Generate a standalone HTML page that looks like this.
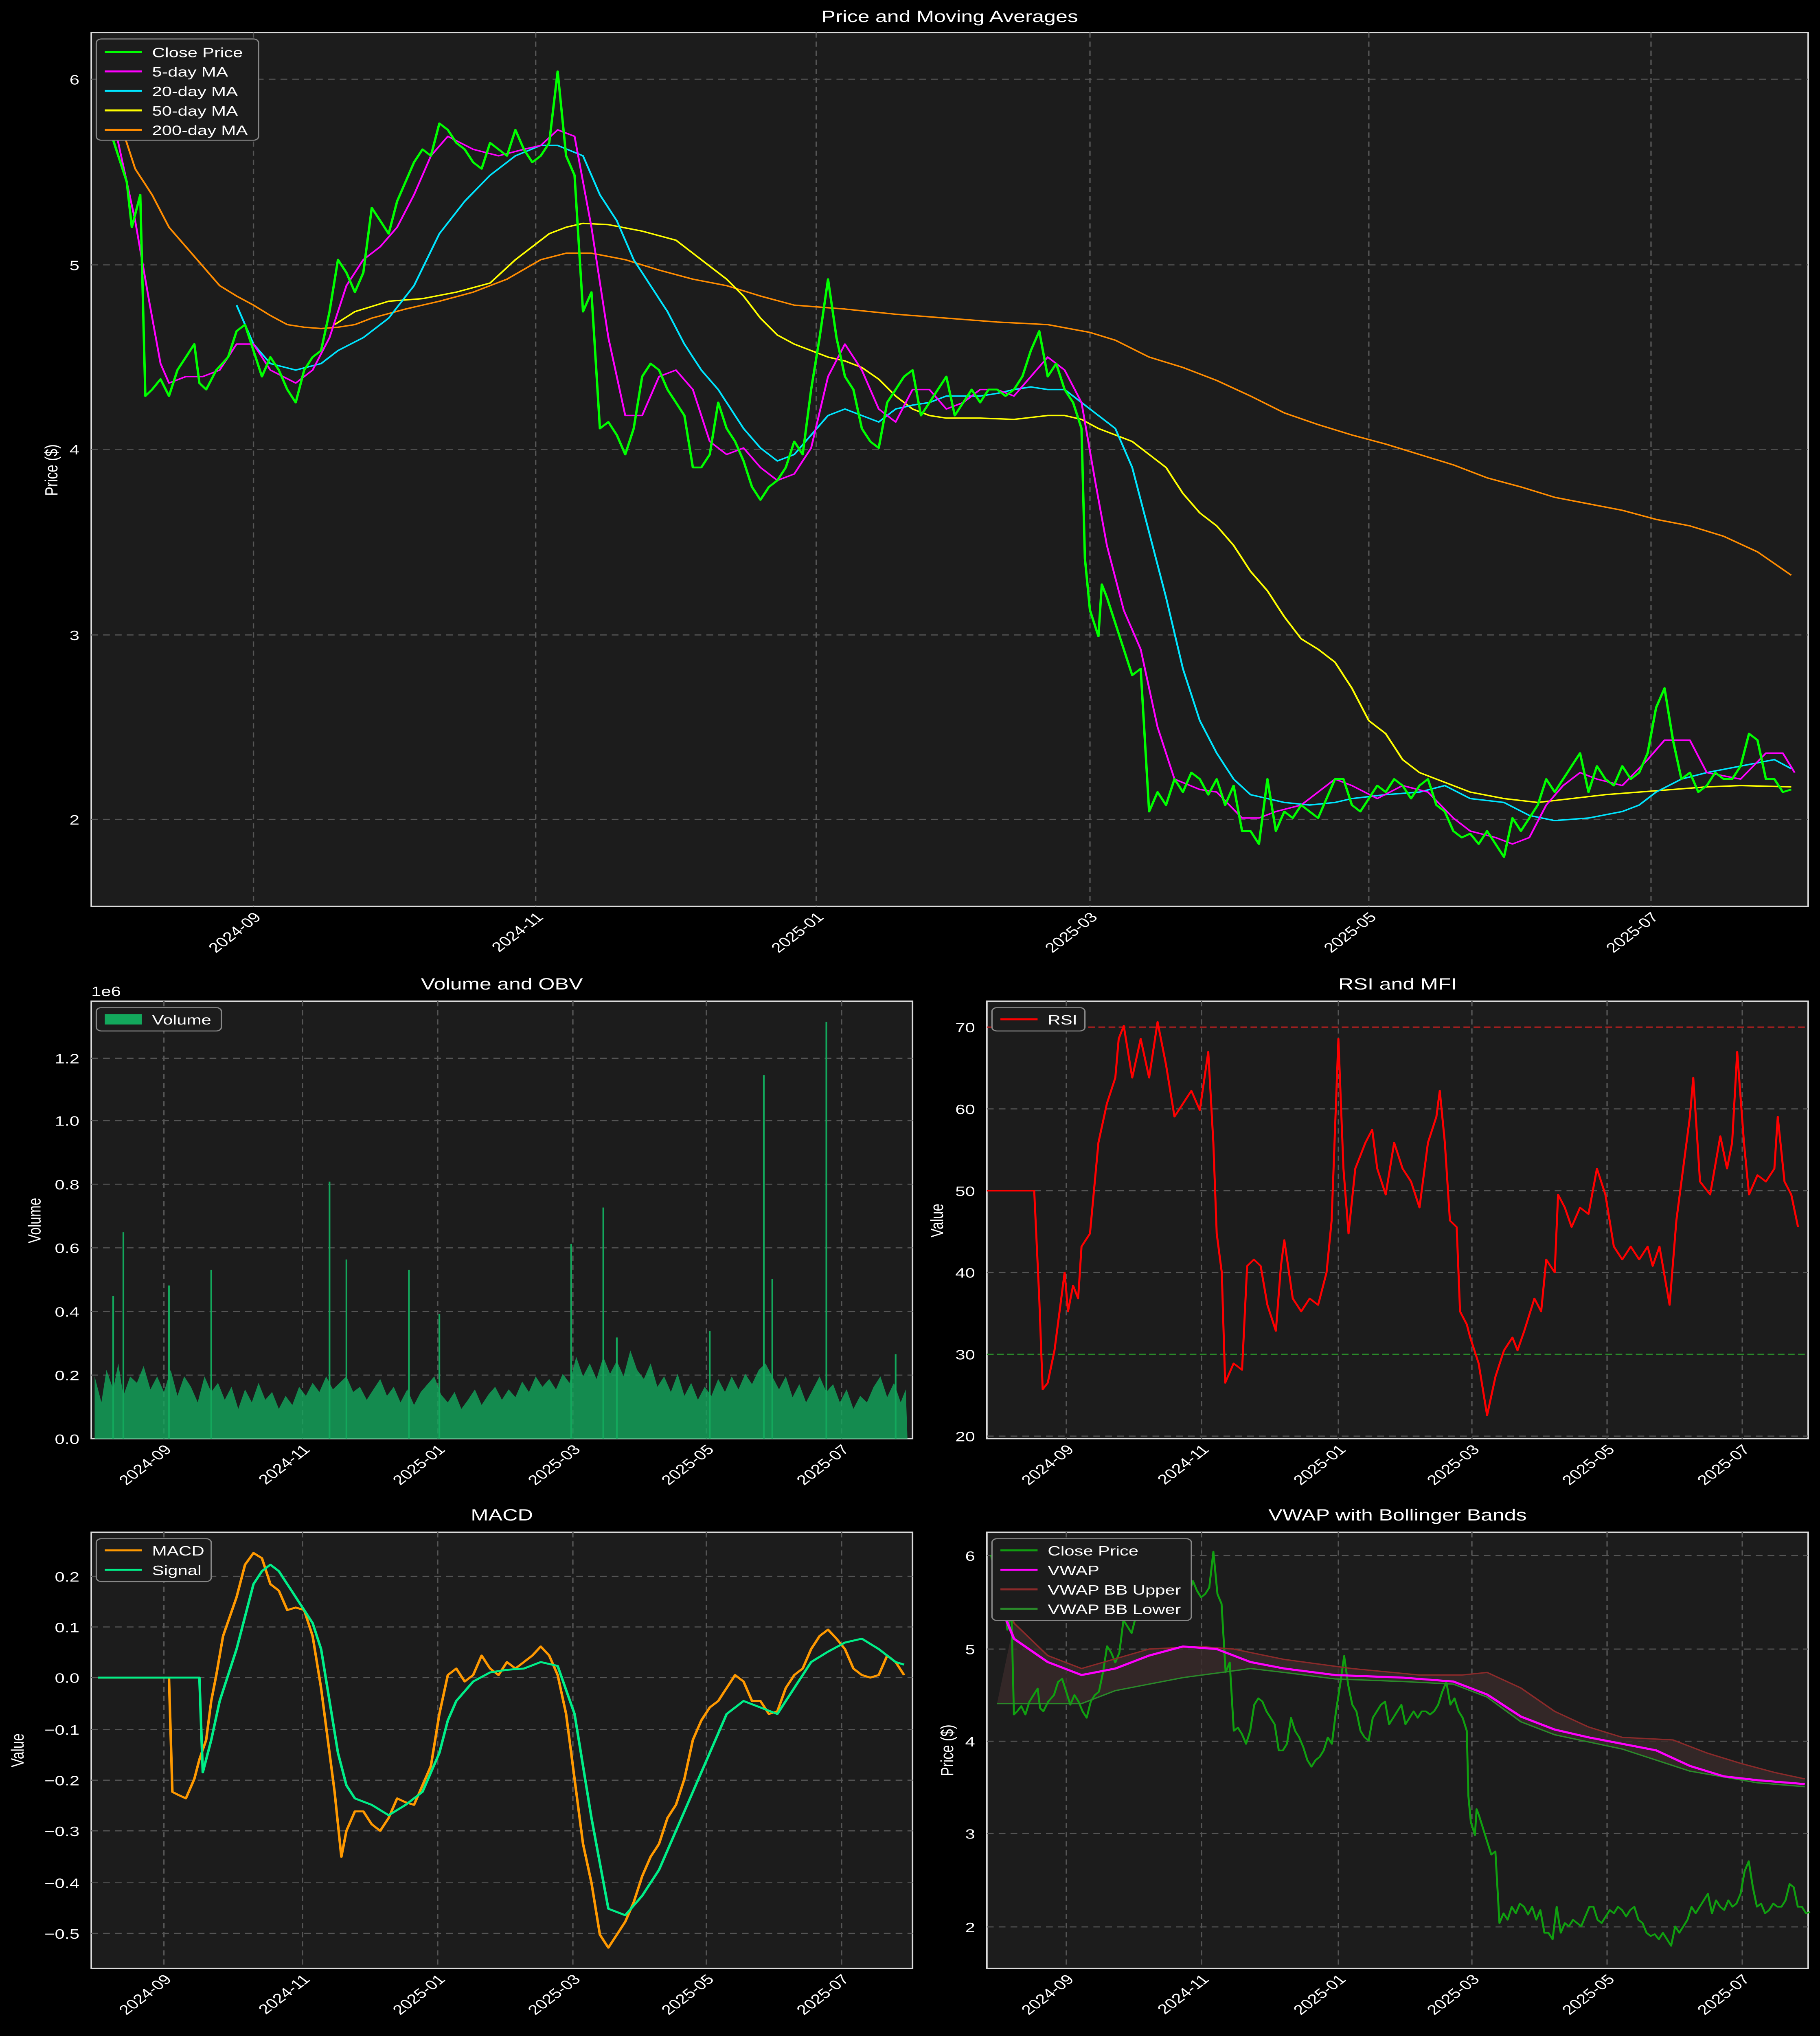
<!DOCTYPE html>
<html><head><meta charset="utf-8">
<style>
html,body{margin:0;padding:0;background:#000;width:100%;height:100%;overflow:hidden;}
svg{display:block;position:fixed;left:0;top:0;width:100vw;height:100vh}
text{font-family:"Liberation Sans","DejaVu Sans",sans-serif;fill:#fff;}
.grid{stroke:#555;stroke-width:0.8;stroke-dasharray:4 3;fill:none}
.ax{fill:#1c1c1c;stroke:#ddd;stroke-width:0.9}
.t{font-size:10.5px}
.ttl{font-size:12.5px;text-anchor:middle}
.ln{fill:none;stroke-linejoin:round}
</style></head><body>
<svg viewBox="0 0 1077 1568" preserveAspectRatio="none" xmlns="http://www.w3.org/2000/svg">
<rect width="1077" height="1568" fill="#000"/>
<defs>
<polyline id="close" class="ln" points="58,60 65,100 75,140 78,175 80,165 83,150 86,305 90,300 95,292 100,305 105,285 110,275 115,265 118,295 122,300 128,285 135,275 140,255 145,250 150,270 155,290 160,275 165,285 170,300 175,310 180,285 185,275 190,270 195,240 200,200 205,210 210,225 215,210 220,160 225,170 230,180 235,155 240,140 245,125 250,115 255,120 260,95 265,100 270,110 275,115 280,125 285,130 290,110 295,115 300,120 305,100 310,115 315,125 320,120 325,110 330,55 335,120 340,135 345,240 350,225 355,330 360,325 365,335 370,350 375,330 380,290 385,280 390,285 395,300 400,310 405,320 410,360 415,360 420,350 425,310 430,330 435,340 440,355 445,375 450,385 455,375 460,370 465,360 470,340 475,350 480,300 485,260 490,215 495,260 500,290 505,300 510,330 515,340 520,345 525,310 530,300 535,290 540,285 545,320 550,310 555,300 560,290 565,320 570,310 575,300 580,310 585,300 590,300 595,305 600,300 605,290 610,270 615,255 620,290 625,280 630,300 635,310 640,330 642,430 645,470 650,490 652,450 655,460 660,480 665,500 670,520 675,515 680,625 685,610 690,620 695,600 700,610 705,595 710,600 715,612 720,600 725,620 730,605 735,640 740,640 745,650 750,600 755,640 760,625 765,630 770,620 775,625 780,630 785,615 790,600 795,600 800,620 805,625 810,615 815,605 820,610 825,600 830,605 835,615 840,605 845,600 850,620 855,625 860,640 865,645 870,642 875,650 880,640 885,650 890,660 895,630 900,640 905,630 910,620 915,600 920,610 925,600 930,590 935,580 940,610 945,590 950,600 955,605 960,590 965,600 970,595 975,580 980,545 985,530 990,570 995,600 1000,595 1005,610 1010,605 1015,595 1020,600 1025,600 1030,590 1035,565 1040,570 1045,600 1050,600 1055,610 1060,608"/>
</defs>

<text x="562" y="17" class="ttl">Price and Moving Averages</text>
<rect x="54" y="25" width="1016" height="673" class="ax"/>
<g class="grid">
<line x1="150" y1="25" x2="150" y2="698"/><line x1="317" y1="25" x2="317" y2="698"/><line x1="483" y1="25" x2="483" y2="698"/><line x1="645" y1="25" x2="645" y2="698"/><line x1="810" y1="25" x2="810" y2="698"/><line x1="977" y1="25" x2="977" y2="698"/>
<line x1="54" y1="61" x2="1070" y2="61"/><line x1="54" y1="204" x2="1070" y2="204"/><line x1="54" y1="346" x2="1070" y2="346"/><line x1="54" y1="489" x2="1070" y2="489"/><line x1="54" y1="631" x2="1070" y2="631"/>
</g>
<g class="t" text-anchor="end">
<text x="47" y="65">6</text><text x="47" y="208">5</text><text x="47" y="350">4</text><text x="47" y="493">3</text><text x="47" y="635">2</text>
</g>
<text transform="translate(34,362) rotate(-90)" class="t" text-anchor="middle">Price ($)</text>
<g class="t" text-anchor="end">
<text transform="translate(155,707) rotate(-45)">2024-09</text>
<text transform="translate(322,707) rotate(-45)">2024-11</text>
<text transform="translate(488,707) rotate(-45)">2025-01</text>
<text transform="translate(650,707) rotate(-45)">2025-03</text>
<text transform="translate(815,707) rotate(-45)">2025-05</text>
<text transform="translate(982,707) rotate(-45)">2025-07</text>
</g>
<polyline class="ln" stroke="#ff8c00" stroke-width="1.1" points="58,60 70,90 80,130 90,150 100,175 110,190 120,205 130,220 140,228 150,235 160,243 170,250 180,252 190,253 200,252 210,250 220,245 240,238 260,232 280,225 300,215 320,200 335,195 350,195 370,200 390,208 410,215 430,220 450,228 470,235 500,238 530,242 560,245 590,248 620,250 645,256 660,262 680,275 700,283 720,293 740,305 760,318 780,327 800,335 820,342 840,350 860,358 880,368 900,375 920,383 940,388 960,393 980,400 1000,405 1020,413 1040,425 1060,443"/>
<polyline class="ln" stroke="#ffff00" stroke-width="1.1" points="198,250 210,240 230,232 250,230 270,225 290,218 305,200 315,190 325,180 335,175 345,172 360,173 380,178 400,185 410,195 420,205 430,215 440,228 450,245 460,258 470,265 480,270 490,275 500,278 510,283 520,292 530,305 540,315 550,320 560,322 580,322 600,323 620,320 630,320 640,323 650,330 660,335 670,340 680,350 690,360 700,380 710,395 720,405 730,420 740,440 750,455 760,475 770,492 780,500 790,510 800,530 810,555 820,565 830,585 840,595 850,600 870,610 890,615 910,618 930,615 950,612 970,610 990,608 1010,606 1030,605 1060,606"/>
<polyline class="ln" stroke="#00e5ff" stroke-width="1.1" points="140,235 150,265 160,280 175,285 190,280 200,270 215,260 230,245 245,220 260,180 275,155 290,135 305,120 320,112 330,112 345,120 355,150 365,170 375,200 385,220 395,240 405,265 415,285 425,300 440,330 450,345 460,355 470,350 480,335 490,320 500,315 510,320 520,325 530,315 540,312 550,310 560,305 570,305 580,305 590,303 600,300 610,298 620,300 630,300 640,310 650,320 660,330 670,360 680,410 690,460 700,515 710,555 720,580 730,600 740,612 750,615 760,618 775,620 790,618 800,615 820,612 840,610 855,605 870,615 890,618 905,628 920,632 940,630 960,625 970,620 980,610 995,600 1010,595 1030,590 1050,585 1060,592"/>
<polyline class="ln" stroke="#ff00ff" stroke-width="1.1" points="58,60 70,110 80,170 88,230 95,280 100,295 110,290 120,290 130,285 140,265 150,265 160,285 175,295 185,285 195,260 205,220 215,200 225,190 235,175 245,150 255,120 265,105 280,115 295,120 310,115 320,112 330,100 340,105 350,175 360,260 370,320 380,320 390,290 400,285 410,300 420,340 430,350 440,345 450,360 460,370 470,365 480,345 490,290 500,265 510,285 520,315 530,325 540,300 550,300 560,315 570,310 580,300 590,300 600,305 610,290 620,275 630,285 640,310 648,370 655,420 665,470 675,500 685,560 695,600 710,608 720,610 735,630 745,630 755,625 770,620 790,600 800,605 815,615 830,605 845,610 860,630 870,640 885,645 895,650 905,645 915,620 925,605 935,595 945,600 960,605 975,585 985,570 1000,570 1010,595 1030,600 1045,580 1055,580 1062,595"/>
<use href="#close" stroke="#00ff00" stroke-width="1.4"/>
<rect x="57" y="30" width="96" height="78" rx="3" fill="#1c1c1c" stroke="#888" stroke-width="0.8"/>
<g stroke-width="1.5">
<line x1="62" y1="40" x2="84" y2="40" stroke="#00ff00"/><line x1="62" y1="55" x2="84" y2="55" stroke="#ff00ff"/><line x1="62" y1="70" x2="84" y2="70" stroke="#00e5ff"/><line x1="62" y1="85" x2="84" y2="85" stroke="#ffff00"/><line x1="62" y1="100" x2="84" y2="100" stroke="#ff8c00"/>
</g>
<g class="t"><text x="90" y="44">Close Price</text><text x="90" y="59">5-day MA</text><text x="90" y="74">20-day MA</text><text x="90" y="89">50-day MA</text><text x="90" y="104">200-day MA</text></g>

<text x="297" y="762" class="ttl">Volume and OBV</text>
<rect x="54" y="771" width="486" height="337" class="ax"/>
<g class="grid">
<line x1="97" y1="771" x2="97" y2="1108"/><line x1="179" y1="771" x2="179" y2="1108"/><line x1="259" y1="771" x2="259" y2="1108"/><line x1="339" y1="771" x2="339" y2="1108"/><line x1="418" y1="771" x2="418" y2="1108"/><line x1="498" y1="771" x2="498" y2="1108"/>
<line x1="54" y1="1059" x2="540" y2="1059"/><line x1="54" y1="1010" x2="540" y2="1010"/><line x1="54" y1="961" x2="540" y2="961"/><line x1="54" y1="912" x2="540" y2="912"/><line x1="54" y1="863" x2="540" y2="863"/><line x1="54" y1="815" x2="540" y2="815"/>
</g>
<g class="t" text-anchor="end">
<text x="47" y="1112">0.0</text><text x="47" y="1063">0.2</text><text x="47" y="1014">0.4</text><text x="47" y="965">0.6</text><text x="47" y="916">0.8</text><text x="47" y="867">1.0</text><text x="47" y="819">1.2</text>
</g>
<text x="54" y="767" class="t">1e6</text>
<text transform="translate(24,940) rotate(-90)" class="t" text-anchor="middle">Volume</text>
<polygon fill="#13a85c" fill-opacity="0.8" points="56,1108 56,1060 60,1080 63,1055 67,1070 70,1050 73,1075 77,1060 81,1065 85,1052 89,1070 93,1060 97,1072 101,1055 105,1075 109,1060 113,1068 117,1080 121,1060 125,1072 129,1065 133,1078 137,1068 141,1085 145,1070 149,1080 153,1065 157,1078 161,1072 165,1085 169,1075 173,1082 177,1068 181,1075 185,1065 189,1072 193,1060 197,1070 201,1065 205,1060 209,1072 213,1068 217,1078 221,1070 225,1062 229,1075 233,1068 237,1080 241,1070 245,1082 249,1072 253,1066 257,1060 261,1074 265,1080 269,1072 273,1085 277,1078 281,1070 285,1082 289,1074 293,1068 297,1078 301,1070 305,1076 309,1064 313,1072 317,1060 321,1068 325,1062 329,1070 333,1058 337,1065 341,1045 345,1060 349,1050 353,1062 357,1045 361,1058 365,1048 369,1060 373,1040 377,1055 381,1062 385,1050 389,1068 393,1060 397,1072 401,1058 405,1075 409,1065 413,1078 417,1068 421,1075 425,1062 429,1072 433,1060 437,1070 441,1058 445,1066 449,1055 453,1050 457,1060 461,1070 465,1060 469,1076 473,1066 477,1080 481,1070 485,1060 489,1072 493,1066 497,1080 501,1070 505,1085 509,1075 513,1080 517,1068 521,1060 525,1076 529,1065 533,1080 536,1070 537,1108"/>
<g stroke="#13a85c" stroke-width="1">
<line x1="67" y1="1108" x2="67" y2="998"/><line x1="73" y1="1108" x2="73" y2="949"/><line x1="100" y1="1108" x2="100" y2="990"/><line x1="125" y1="1108" x2="125" y2="978"/><line x1="195" y1="1108" x2="195" y2="910"/><line x1="205" y1="1108" x2="205" y2="970"/><line x1="242" y1="1108" x2="242" y2="978"/><line x1="260" y1="1108" x2="260" y2="1012"/><line x1="338" y1="1108" x2="338" y2="958"/><line x1="357" y1="1108" x2="357" y2="930"/><line x1="452" y1="1108" x2="452" y2="828"/><line x1="457" y1="1108" x2="457" y2="985"/><line x1="489" y1="1108" x2="489" y2="787"/><line x1="530" y1="1108" x2="530" y2="1043"/><line x1="365" y1="1108" x2="365" y2="1030"/><line x1="420" y1="1108" x2="420" y2="1025"/>
</g>
<rect x="57" y="776" width="74" height="18" rx="3" fill="#1c1c1c" stroke="#888" stroke-width="0.8"/>
<rect x="62" y="781" width="22" height="8" fill="#13a85c"/>
<text x="90" y="789" class="t">Volume</text>
<g class="t" text-anchor="end">
<text transform="translate(102,1117) rotate(-45)">2024-09</text>
<text transform="translate(184,1117) rotate(-45)">2024-11</text>
<text transform="translate(264,1117) rotate(-45)">2025-01</text>
<text transform="translate(344,1117) rotate(-45)">2025-03</text>
<text transform="translate(423,1117) rotate(-45)">2025-05</text>
<text transform="translate(503,1117) rotate(-45)">2025-07</text>
</g>

<text x="827" y="762" class="ttl">RSI and MFI</text>
<rect x="584" y="771" width="486" height="337" class="ax"/>
<g class="grid">
<line x1="631" y1="771" x2="631" y2="1108"/><line x1="711" y1="771" x2="711" y2="1108"/><line x1="792" y1="771" x2="792" y2="1108"/><line x1="871" y1="771" x2="871" y2="1108"/><line x1="951" y1="771" x2="951" y2="1108"/><line x1="1031" y1="771" x2="1031" y2="1108"/>
<line x1="584" y1="854" x2="1070" y2="854"/><line x1="584" y1="917" x2="1070" y2="917"/><line x1="584" y1="980" x2="1070" y2="980"/><line x1="584" y1="1106" x2="1070" y2="1106"/>
</g>
<line x1="584" y1="791" x2="1070" y2="791" stroke="#c02020" stroke-width="0.9" stroke-dasharray="4 2"/>
<line x1="584" y1="1043" x2="1070" y2="1043" stroke="#2a8a2a" stroke-width="0.9" stroke-dasharray="4 2"/>
<g class="t" text-anchor="end">
<text x="577" y="795">70</text><text x="577" y="858">60</text><text x="577" y="921">50</text><text x="577" y="984">40</text><text x="577" y="1047">30</text><text x="577" y="1110">20</text>
</g>
<text transform="translate(558,940) rotate(-90)" class="t" text-anchor="middle">Value</text>
<polyline class="ln" stroke="#ff0000" stroke-width="1.2" points="584,917 612,917 615,1000 617,1070 620,1065 624,1040 628,1000 630,980 632,1010 635,990 638,1000 640,960 645,950 650,880 655,850 660,830 662,800 665,790 670,830 675,800 680,830 685,787 690,820 695,860 700,850 705,840 710,855 715,810 718,880 720,950 723,980 725,1065 730,1050 735,1055 738,975 742,970 746,975 750,1005 755,1025 758,975 760,955 765,1000 770,1010 775,1000 780,1005 785,980 788,940 790,870 792,800 795,900 798,950 802,900 808,880 812,870 815,900 820,920 825,880 830,900 835,910 840,930 845,880 850,860 852,840 855,880 858,940 862,945 864,1010 868,1020 870,1030 875,1050 880,1090 885,1060 890,1040 895,1030 898,1040 902,1025 908,1000 912,1010 915,970 920,980 922,920 926,930 930,945 935,930 940,935 945,900 950,920 955,960 960,970 965,960 970,970 975,960 978,975 982,960 988,1005 992,940 995,910 1000,860 1002,830 1006,910 1012,920 1018,875 1022,900 1025,880 1028,810 1032,880 1035,920 1040,905 1045,910 1050,900 1052,860 1056,910 1060,920 1064,945"/>
<rect x="587" y="776" width="55" height="18" rx="3" fill="#1c1c1c" stroke="#888" stroke-width="0.8"/>
<line x1="592" y1="785" x2="614" y2="785" stroke="#ff0000" stroke-width="1.5"/>
<text x="620" y="789" class="t">RSI</text>
<g class="t" text-anchor="end">
<text transform="translate(636,1117) rotate(-45)">2024-09</text>
<text transform="translate(716,1117) rotate(-45)">2024-11</text>
<text transform="translate(797,1117) rotate(-45)">2025-01</text>
<text transform="translate(876,1117) rotate(-45)">2025-03</text>
<text transform="translate(956,1117) rotate(-45)">2025-05</text>
<text transform="translate(1036,1117) rotate(-45)">2025-07</text>
</g>

<text x="297" y="1171" class="ttl">MACD</text>
<rect x="54" y="1180" width="486" height="336" class="ax"/>
<g class="grid">
<line x1="97" y1="1180" x2="97" y2="1516"/><line x1="179" y1="1180" x2="179" y2="1516"/><line x1="259" y1="1180" x2="259" y2="1516"/><line x1="339" y1="1180" x2="339" y2="1516"/><line x1="418" y1="1180" x2="418" y2="1516"/><line x1="498" y1="1180" x2="498" y2="1516"/>
<line x1="54" y1="1214" x2="540" y2="1214"/><line x1="54" y1="1253" x2="540" y2="1253"/><line x1="54" y1="1292" x2="540" y2="1292"/><line x1="54" y1="1332" x2="540" y2="1332"/><line x1="54" y1="1371" x2="540" y2="1371"/><line x1="54" y1="1410" x2="540" y2="1410"/><line x1="54" y1="1450" x2="540" y2="1450"/><line x1="54" y1="1489" x2="540" y2="1489"/>
</g>
<g class="t" text-anchor="end">
<text x="47" y="1218">0.2</text><text x="47" y="1257">0.1</text><text x="47" y="1296">0.0</text><text x="47" y="1336">−0.1</text><text x="47" y="1375">−0.2</text><text x="47" y="1414">−0.3</text><text x="47" y="1454">−0.4</text><text x="47" y="1493">−0.5</text>
</g>
<text transform="translate(14,1348) rotate(-90)" class="t" text-anchor="middle">Value</text>
<polyline class="ln" stroke="#ff9900" stroke-width="1.5" points="58,1292 100,1292 102,1380 105,1382 110,1385 115,1370 118,1355 122,1340 125,1310 128,1290 132,1260 136,1245 140,1230 145,1205 150,1196 155,1200 160,1220 165,1225 170,1240 175,1238 180,1240 185,1260 190,1300 195,1350 198,1380 202,1430 205,1410 210,1395 215,1395 220,1405 225,1410 230,1400 235,1385 240,1388 245,1390 250,1375 255,1360 260,1320 265,1290 270,1285 275,1295 280,1290 285,1275 290,1285 295,1290 300,1280 305,1285 310,1280 315,1275 320,1268 325,1275 330,1290 335,1320 340,1370 345,1420 350,1450 355,1490 360,1500 365,1490 370,1480 375,1465 380,1445 385,1430 390,1420 395,1400 400,1390 405,1370 410,1340 415,1325 420,1315 425,1310 430,1300 435,1290 440,1295 445,1310 450,1310 455,1320 460,1318 465,1300 470,1290 475,1285 480,1270 485,1260 490,1255 495,1262 500,1270 505,1285 510,1290 515,1292 520,1290 525,1275 530,1280 535,1290"/>
<polyline class="ln" stroke="#00ee88" stroke-width="1.5" points="58,1292 118,1292 120,1365 125,1340 130,1310 135,1290 140,1270 145,1245 150,1220 155,1210 160,1205 165,1210 170,1220 175,1230 180,1240 185,1250 190,1270 195,1310 200,1350 205,1375 210,1385 220,1390 230,1398 240,1390 250,1380 260,1350 265,1325 270,1310 280,1295 290,1288 300,1286 310,1285 320,1280 330,1283 340,1320 350,1400 360,1470 370,1475 380,1460 390,1440 400,1410 410,1380 420,1350 430,1320 440,1310 450,1315 460,1320 470,1300 480,1280 490,1272 500,1265 510,1262 520,1270 530,1280 535,1282"/>
<rect x="57" y="1185" width="68" height="33" rx="3" fill="#1c1c1c" stroke="#888" stroke-width="0.8"/>
<line x1="62" y1="1194" x2="84" y2="1194" stroke="#ff9900" stroke-width="1.5"/>
<line x1="62" y1="1209" x2="84" y2="1209" stroke="#00ee88" stroke-width="1.5"/>
<text x="90" y="1198" class="t">MACD</text><text x="90" y="1213" class="t">Signal</text>
<g class="t" text-anchor="end">
<text transform="translate(102,1525) rotate(-45)">2024-09</text>
<text transform="translate(184,1525) rotate(-45)">2024-11</text>
<text transform="translate(264,1525) rotate(-45)">2025-01</text>
<text transform="translate(344,1525) rotate(-45)">2025-03</text>
<text transform="translate(423,1525) rotate(-45)">2025-05</text>
<text transform="translate(503,1525) rotate(-45)">2025-07</text>
</g>

<text x="827" y="1171" class="ttl">VWAP with Bollinger Bands</text>
<rect x="584" y="1180" width="486" height="336" class="ax"/>
<g class="grid">
<line x1="631" y1="1180" x2="631" y2="1516"/><line x1="711" y1="1180" x2="711" y2="1516"/><line x1="792" y1="1180" x2="792" y2="1516"/><line x1="871" y1="1180" x2="871" y2="1516"/><line x1="951" y1="1180" x2="951" y2="1516"/><line x1="1031" y1="1180" x2="1031" y2="1516"/>
<line x1="584" y1="1198" x2="1070" y2="1198"/><line x1="584" y1="1270" x2="1070" y2="1270"/><line x1="584" y1="1341" x2="1070" y2="1341"/><line x1="584" y1="1412" x2="1070" y2="1412"/><line x1="584" y1="1484" x2="1070" y2="1484"/>
</g>
<g class="t" text-anchor="end">
<text x="577" y="1202">6</text><text x="577" y="1274">5</text><text x="577" y="1345">4</text><text x="577" y="1416">3</text><text x="577" y="1488">2</text>
</g>
<text transform="translate(564,1348) rotate(-90)" class="t" text-anchor="middle">Price ($)</text>
<polygon fill="#3a2a2a" opacity="0.8" points="600,1250 620,1275 640,1285 680,1270 710,1268 730,1270 760,1278 800,1285 840,1290 865,1290 880,1288 900,1300 920,1318 940,1330 960,1338 990,1340 1010,1350 1030,1358 1050,1365 1068,1370 1068,1376 1040,1373 1000,1364 960,1347 920,1336 900,1326 880,1307 860,1297 830,1295 790,1293 760,1288 740,1285 700,1292 660,1302 640,1312 590,1312"/>
<use href="#close" transform="translate(558.4,1167.4) scale(0.4837,0.5018)" stroke="#10a010" stroke-width="2.4"/>
<polyline class="ln" stroke="#8b2a2a" stroke-width="1" points="590,1200 600,1250 620,1275 640,1285 680,1270 710,1268 730,1270 760,1278 800,1285 840,1290 865,1290 880,1288 900,1300 920,1318 940,1330 960,1338 990,1340 1010,1350 1030,1358 1050,1365 1068,1370"/>
<polyline class="ln" stroke="#2a8a2a" stroke-width="1" points="590,1312 640,1312 660,1302 700,1292 740,1285 760,1288 790,1293 830,1295 860,1297 880,1307 900,1326 920,1336 960,1347 1000,1364 1040,1373 1068,1376"/>
<polyline class="ln" stroke="#ff00ff" stroke-width="1.6" points="590,1230 600,1262 620,1280 640,1290 660,1285 680,1275 700,1268 720,1270 740,1280 760,1285 790,1290 830,1292 860,1295 880,1305 900,1322 920,1332 940,1338 960,1343 980,1348 1000,1360 1020,1368 1040,1371 1068,1374"/>
<rect x="587" y="1185" width="118" height="63" rx="3" fill="#1c1c1c" stroke="#888" stroke-width="0.8"/>
<line x1="592" y1="1194" x2="614" y2="1194" stroke="#10a010" stroke-width="1.5"/>
<line x1="592" y1="1209" x2="614" y2="1209" stroke="#ff00ff" stroke-width="1.5"/>
<line x1="592" y1="1224" x2="614" y2="1224" stroke="#8b2a2a" stroke-width="1.5"/>
<line x1="592" y1="1239" x2="614" y2="1239" stroke="#2a8a2a" stroke-width="1.5"/>
<g class="t"><text x="620" y="1198">Close Price</text><text x="620" y="1213">VWAP</text><text x="620" y="1228">VWAP BB Upper</text><text x="620" y="1243">VWAP BB Lower</text></g>
<g class="t" text-anchor="end">
<text transform="translate(636,1525) rotate(-45)">2024-09</text>
<text transform="translate(716,1525) rotate(-45)">2024-11</text>
<text transform="translate(797,1525) rotate(-45)">2025-01</text>
<text transform="translate(876,1525) rotate(-45)">2025-03</text>
<text transform="translate(956,1525) rotate(-45)">2025-05</text>
<text transform="translate(1036,1525) rotate(-45)">2025-07</text>
</g>
</svg>
</body></html>
